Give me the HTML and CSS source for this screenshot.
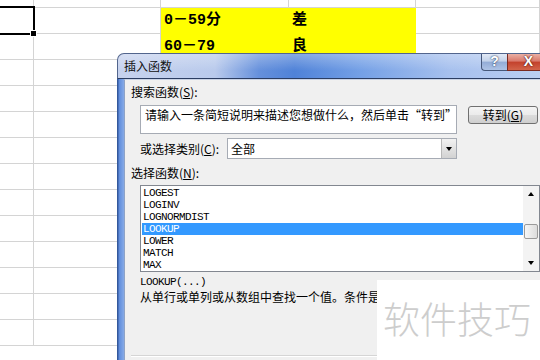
FILE: index.html
```html
<!DOCTYPE html>
<html>
    <head>
        <meta charset="utf-8">
        <title>插入函数</title>
        <link rel="stylesheet" href="styles.css">
    </head>
    <body>
        <div class="sheet">
            <div class="cell"></div><div class="cell"></div><div class="cell"></div><div class="cell"></div><div class="cell"></div>
            <div class="cell sel"></div><div class="cell"></div><div class="cell fill">0－59分</div><div class="cell fill">差</div><div class="cell"></div>
            <div class="cell"></div><div class="cell"></div><div class="cell fill">60－79</div><div class="cell fill">良</div><div class="cell"></div>
            <div class="cell"></div><div class="cell"></div><div class="cell fill"></div><div class="cell fill"></div><div class="cell"></div>
            <div class="cell"></div><div class="cell"></div><div class="cell"></div><div class="cell"></div><div class="cell"></div>
            <div class="cell"></div><div class="cell"></div><div class="cell"></div><div class="cell"></div><div class="cell"></div>
            <div class="cell"></div><div class="cell"></div><div class="cell"></div><div class="cell"></div><div class="cell"></div>
            <div class="cell"></div><div class="cell"></div><div class="cell"></div><div class="cell"></div><div class="cell"></div>
            <div class="cell"></div><div class="cell"></div><div class="cell"></div><div class="cell"></div><div class="cell"></div>
            <div class="cell"></div><div class="cell"></div><div class="cell"></div><div class="cell"></div><div class="cell"></div>
            <div class="cell"></div><div class="cell"></div><div class="cell"></div><div class="cell"></div><div class="cell"></div>
            <div class="cell"></div><div class="cell"></div><div class="cell"></div><div class="cell"></div><div class="cell"></div>
            <div class="cell"></div><div class="cell"></div><div class="cell"></div><div class="cell"></div><div class="cell"></div>
            <div class="cell"></div><div class="cell"></div><div class="cell"></div><div class="cell"></div><div class="cell"></div>
        </div>

        <div class="dialog">
            <div class="titlebar">
                <span class="title">插入函数</span>
                <span class="tb-btn help">?</span>
                <span class="tb-btn close">X</span>
            </div>
            <div class="frame">
                <div class="panel">
                    <div class="label">搜索函数(<u>S</u>):</div>
                    <div class="search-row">
                        <div class="search">请输入一条简短说明来描述您想做什么，然后单击“转到”</div>
                        <div class="btn">转到(<u>G</u>)</div>
                    </div>
                    <div class="cat-row">
                        <span>或选择类别(<u>C</u>):</span>
                        <div class="select"><span>全部</span><span class="drop"></span></div>
                    </div>
                    <div class="label gap">选择函数(<u>N</u>):</div>
                    <div class="listbox">
                        <ul class="items">
                            <li>LOGEST</li>
                            <li>LOGINV</li>
                            <li>LOGNORMDIST</li>
                            <li class="on">LOOKUP</li>
                            <li>LOWER</li>
                            <li>MATCH</li>
                            <li>MAX</li>
                        </ul>
                        <div class="scroll">
                            <span class="sb-btn"><i class="up"></i></span>
                            <span class="thumb"></span>
                            <span class="sb-btn last"><i class="down"></i></span>
                        </div>
                    </div>
                    <div class="syntax">LOOKUP(...)</div>
                    <div class="desc">从单行或单列或从数组中查找一个值。条件是</div>
                    <div class="sep"></div>
                </div>
            </div>
        </div>

        <div class="mark">软件技巧</div>
    </body>
</html>
```

FILE: styles.css
```css
body {
    margin: 0;
    width: 540px;
    height: 360px;
    overflow: hidden;
    position: relative;
    background: #fff;
    font-family: "Noto Sans CJK SC", sans-serif;
    font-size: 12px;
    color: #000;
}

/* 表格 */
.sheet {
    display: grid;
    grid-template-columns: 34px 127px 128px 127px 1fr;
    grid-template-rows: 8px repeat(14, 26px);
}
.cell {
    border-right: 1px solid #d4d4d4;
    border-bottom: 1px solid #d4d4d4;
}
.fill {
    background: #ffff00;
    border-color: #ffff00;
    padding-left: 3px;
    font: bold 15px/26px "Liberation Mono", "Noto Sans CJK SC", monospace;
}
.sel {
    position: relative;
}
.sel::after {
    content: "";
    position: absolute;
    left: -3px;
    top: -2px;
    right: -2px;
    bottom: -2px;
    border: 2px solid #000;
}
.sel::before {
    content: "";
    position: absolute;
    right: -4px;
    bottom: -4px;
    width: 5px;
    height: 5px;
    background: #000;
    border: 1px solid #fff;
    z-index: 1;
}

/* 对话框 */
.dialog {
    position: absolute;
    left: 117px;
    top: 53px;
    width: 443px;
}
.titlebar {
    box-sizing: border-box;
    height: 26px;
    display: flex;
    align-items: flex-start;
    padding: 0 9px 0 6px;
    border: 1px solid #52658d;
    border-bottom-color: #2b3d62;
    border-radius: 7px 7px 0 0;
    background:
        linear-gradient(to bottom, rgba(255,255,255,.3), rgba(255,255,255,0) 70%),
        linear-gradient(to right, #c6d2ee 0%, #b9caec 22%, #6590dc 32%, #4f82d8 40%, #74a0e6 55%, #a6c0ee 75%, #bed1f2 100%);
}
.title {
    line-height: 24px;
    color: #111;
}
.tb-btn {
    box-sizing: border-box;
    height: 17px;
    text-align: center;
    color: #fff;
    font: bold 14px/15px "Liberation Sans", sans-serif;
    border: 1px solid #46587a;
    border-top: none;
}
.help {
    margin-left: auto;
    width: 26px;
    border-right: none;
    border-radius: 0 0 0 4px;
    background: linear-gradient(to bottom, #e3eaf6 0%, #c3d2ea 45%, #93acd6 50%, #aec3e6 100%);
    text-shadow: 0 0 2px #34476b, 0 0 1px #34476b;
}
.close {
    width: 43px;
    border-color: #7a2a20;
    background: linear-gradient(to bottom, #eab0a4 0%, #d9786a 45%, #c3412c 50%, #d2644a 100%);
    text-shadow: 0 0 2px #5a1a10, 0 0 1px #5a1a10;
}
.frame {
    height: 290px;
    padding-left: 7px;
    background: linear-gradient(to right, #33589c 0, #33589c 1px, #5f8cdc 2px, #86aae6 7px);
}
.panel {
    height: 100%;
    padding: 4px 0 0 6px;
    background: #f0f0f0;
    border-left: 1px solid #8fa3c6;
    border-top: 1px solid #c9d3e6;
    box-sizing: border-box;
}
.label {
    line-height: 16px;
}
.label.gap {
    margin-top: 6px;
}
.search-row {
    display: flex;
    margin: 5px 0 0 9px;
}
.search {
    box-sizing: border-box;
    width: 317px;
    height: 29px;
    padding: 1px 4px;
    line-height: 16px;
    background: #fff;
    border: 1px solid #a6abb4;
    white-space: nowrap;
}
.btn {
    box-sizing: border-box;
    width: 70px;
    height: 18px;
    margin: 1px 0 0 11px;
    line-height: 16px;
    text-align: center;
    border: 1px solid #707070;
    border-radius: 3px;
    background: linear-gradient(to bottom, #f4f4f4 0%, #ebebeb 50%, #dcdcdc 50%, #cfcfcf 100%);
}
.cat-row {
    display: flex;
    align-items: center;
    justify-content: space-between;
    width: 317px;
    height: 21px;
    margin: 4px 0 0 9px;
}
.select {
    box-sizing: border-box;
    width: 230px;
    height: 21px;
    display: flex;
    align-items: center;
    padding-left: 3px;
    background: #fff;
    border: 1px solid #a6abb4;
}
.drop {
    position: relative;
    margin-left: auto;
    width: 15px;
    height: 19px;
    box-sizing: border-box;
    border-left: 1px solid #b8b8b8;
    background: linear-gradient(to bottom, #f2f2f2, #d2d2d2);
}
.drop::after {
    content: "";
    position: absolute;
    left: 4px;
    top: 8px;
    border-left: 3px solid transparent;
    border-right: 3px solid transparent;
    border-top: 4px solid #000;
}

/* 函数列表 */
.listbox {
    box-sizing: border-box;
    display: flex;
    width: 400px;
    height: 87px;
    margin: 4px 0 0 9px;
    background: #fff;
    border: 1px solid #828790;
}
.items {
    flex: 1;
    list-style: none;
    margin: 0;
    padding: 1px 0 0 1px;
    font: 11px/12px "Liberation Mono", monospace;
    letter-spacing: -0.6px;
}
.items li {
    height: 12px;
    padding-left: 1px;
    overflow: hidden;
}
.items li.on {
    background: #3399ff;
    color: #fff;
}
.scroll {
    width: 16px;
    display: flex;
    flex-direction: column;
    align-items: center;
    background: #f3f3f3;
}
.sb-btn {
    width: 16px;
    height: 16px;
    display: flex;
    align-items: center;
    justify-content: center;
}
.sb-btn.last {
    margin-top: auto;
}
.up {
    border-left: 3px solid transparent;
    border-right: 3px solid transparent;
    border-bottom: 4px solid #000;
}
.down {
    border-left: 3px solid transparent;
    border-right: 3px solid transparent;
    border-top: 4px solid #000;
}
.thumb {
    box-sizing: border-box;
    width: 14px;
    height: 15px;
    margin-top: 22px;
    border: 1px solid #9a9a9a;
    border-radius: 2px;
    background: linear-gradient(to right, #f6f6f6, #dcdcdc);
}
.syntax {
    margin: 3px 0 0 9px;
    font: 11px/14px "Liberation Mono", monospace;
    letter-spacing: -0.6px;
}
.desc {
    margin-left: 9px;
    line-height: 16px;
    white-space: nowrap;
}
.sep {
    margin-top: 50px;
    border-top: 1px solid #d5d5d5;
    border-bottom: 1px solid #fff;
}

/* 水印 */
.mark {
    position: absolute;
    left: 377px;
    top: 280px;
    width: 163px;
    height: 80px;
    box-sizing: border-box;
    padding: 18px 0 0 6px;
    background: #fff;
    color: #cdcdcd;
    font-size: 37px;
    font-weight: 300;
    line-height: 40px;
    white-space: nowrap;
}
```
